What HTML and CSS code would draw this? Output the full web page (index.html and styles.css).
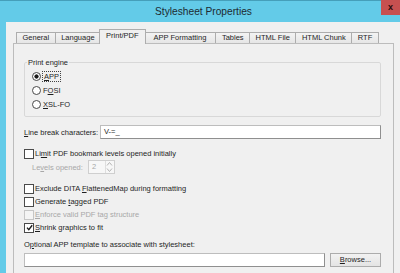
FILE: index.html
```html
<!DOCTYPE html>
<html lang="en">
<head>
    <meta charset="UTF-8">
    <meta name="viewport" content="width=device-width, initial-scale=1.0">
    <title>Stylesheet Properties</title>
    <link rel="stylesheet" href="styles.css">
</head>
<body>

<div class="window">
    <!-- Barra de título -->
    <div class="titlebar">
        <span class="title">Stylesheet Properties</span>
        <span class="close">x</span>
    </div>

    <div class="client">
        <!-- Abas -->
        <div class="tabs">
            <div class="tab">General</div>
            <div class="tab">Language</div>
            <div class="tab active">Print/PDF</div>
            <div class="tab wide">APP Formatting</div>
            <div class="tab">Tables</div>
            <div class="tab">HTML File</div>
            <div class="tab">HTML Chunk</div>
            <div class="tab">RTF</div>
        </div>

        <div class="panel">
            <fieldset class="group">
                <legend>Print engine</legend>
                <div class="row">
                    <span class="radio on"></span>
                    <span class="focus"><u>A</u>PP</span>
                </div>
                <div class="row">
                    <span class="radio"></span>
                    <span>F<u>O</u>SI</span>
                </div>
                <div class="row">
                    <span class="radio"></span>
                    <span><u>X</u>SL-FO</span>
                </div>
            </fieldset>

            <div class="row field-row">
                <span class="field-label"><u>L</u>ine break characters:</span>
                <div class="textbox">V-=_</div>
            </div>

            <div class="row check-row spaced">
                <span class="check"></span>
                <span>Li<u>m</u>it PDF bookmark levels opened initially</span>
            </div>
            <div class="row levels-row disabled">
                <span>Le<u>v</u>els opened:</span>
                <div class="spin">
                    <span class="spin-value">2</span>
                    <span class="spin-arrows">
                        <svg width="7" height="6" viewBox="0 0 7 6"><path d="M1 4.5 L3.5 1.5 L6 4.5" fill="none" stroke="#b4b4b4" stroke-width="1"/></svg>
                        <svg width="7" height="6" viewBox="0 0 7 6"><path d="M1 1.5 L3.5 4.5 L6 1.5" fill="none" stroke="#b4b4b4" stroke-width="1"/></svg>
                    </span>
                </div>
            </div>

            <div class="row check-row spaced">
                <span class="check"></span>
                <span>Exclude DITA <u>F</u>lattenedMap during formatting</span>
            </div>
            <div class="row check-row">
                <span class="check"></span>
                <span>Generate <u>t</u>agged PDF</span>
            </div>
            <div class="row check-row disabled">
                <span class="check"></span>
                <span><u>E</u>nforce valid PDF tag structure</span>
            </div>
            <div class="row check-row">
                <span class="check">
                    <svg width="7" height="7" viewBox="0 0 7 7"><path d="M1 3.6 L2.8 5.6 L6.2 1.2" fill="none" stroke="#1c1c1c" stroke-width="1.4"/></svg>
                </span>
                <span><u>S</u>hrink graphics to fit</span>
            </div>

            <div class="row template-label">
                <span>O<u>p</u>tional APP template to associate with stylesheet:</span>
            </div>
            <div class="row template-row">
                <div class="textbox"></div>
                <div class="button"><u>B</u>rowse...</div>
            </div>
        </div>
    </div>
</div>

</body>
</html>
```

FILE: styles.css
```css
* {
    box-sizing: border-box;
}

body {
    margin: 0;
    height: 273px;
    overflow: hidden;
    background-color: #63cbe8;
    font-family: "Liberation Sans", Arial, sans-serif;
    font-size: 7.5px;
    color: #1f1f1f;
}

.window {
    border-top: 1px solid #459fba;
}

/* Barra de título */
.titlebar {
    display: flex;
    height: 21px;
}

.title {
    flex: 1;
    padding-left: 26px;
    text-align: center;
    font-size: 10.2px;
    line-height: 21px;
    color: #1d2a30;
}

.close {
    width: 19px;
    height: 15px;
    margin-top: -1px;
    background-color: #c75050;
    color: #2a0c0c;
    font-weight: bold;
    font-size: 9px;
    line-height: 15px;
    text-align: center;
}

.client {
    margin-left: 6px;
    height: 252px;
    padding: 7px 0 0 7px;
    background-color: #f0f0f0;
}

/* Abas */
.tabs {
    display: flex;
    align-items: flex-end;
    height: 14px;
    padding-left: 3px;
}

.tab {
    position: relative;
    height: 11px;
    padding: 0 5.5px;
    border: 1px solid #adadad;
    border-bottom: none;
    background: linear-gradient(#f3f3f3, #e6e6e6);
    line-height: 10px;
    white-space: nowrap;
}

.tab + .tab {
    margin-left: -1px;
}

.tab.wide {
    padding: 0 9px 0 9px;
}

.tab.active {
    z-index: 1;
    height: 15px;
    margin: 0 -2px -1px -2px;
    padding: 0 6px;
    background: #f0f0f0;
    line-height: 12px;
}

.tab.active + .tab {
    margin-left: 0;
}

/* Painel */
.panel {
    width: 381px;
    height: 240px;
    padding: 12px 12px 0 10px;
    border: 1px solid #bcbcbc;
}

.row {
    display: flex;
    align-items: center;
    height: 13px;
    white-space: nowrap;
}

.group {
    margin: 0;
    padding: 0 5px 5px 7px;
    border: 1px solid #d8d8d8;
    border-radius: 2px;
}

.group legend {
    margin-left: -5px;
    padding: 0 1px;
    line-height: 13px;
}

.group .row {
    height: 14px;
    gap: 2px;
}

.radio {
    width: 9px;
    height: 9px;
    border: 1px solid #4a4a4a;
    border-radius: 50%;
    background-color: #fff;
}

.radio.on {
    background: radial-gradient(circle, #1a1a1a 0, #1a1a1a 1.8px, #fff 2.4px);
}

.focus {
    padding: 0 1px;
    line-height: 9px;
    outline: 1px dotted #444;
}

.field-row {
    height: 14px;
    margin-top: 8px;
}

.field-label {
    width: 76px;
}

.textbox {
    flex: 1;
    height: 14px;
    padding-left: 3px;
    border: 1px solid;
    border-color: #bdbdbd #8f8f8f #8f8f8f #bdbdbd;
    background-color: #fff;
    line-height: 12px;
}

.check-row {
    gap: 1px;
}

.spaced {
    margin-top: 8px;
}

.check {
    display: flex;
    align-items: center;
    justify-content: center;
    width: 10px;
    height: 10px;
    border: 1px solid #4a4a4a;
    background-color: #fff;
}

.disabled {
    color: #a8a8a8;
}

.disabled .check {
    border-color: #c6c6c6;
    background-color: #f4f4f4;
}

.levels-row {
    height: 14px;
    padding-left: 8px;
    gap: 5px;
}

.spin {
    display: flex;
    width: 27px;
    height: 14px;
    border: 1px solid #cfcfcf;
    background-color: #f7f7f7;
}

.spin-value {
    flex: 1;
    padding-left: 3px;
    line-height: 12px;
}

.spin-arrows {
    display: flex;
    flex-direction: column;
    justify-content: center;
    width: 9px;
    border-left: 1px solid #dedede;
}

.template-label {
    margin-top: 4px;
}

.template-row {
    height: 14px;
    margin-top: 2px;
    gap: 5px;
}

.button {
    width: 51px;
    height: 14px;
    border: 1px solid #acacac;
    background: linear-gradient(#f2f2f2, #e4e4e4);
    text-align: center;
    line-height: 12px;
}
```
